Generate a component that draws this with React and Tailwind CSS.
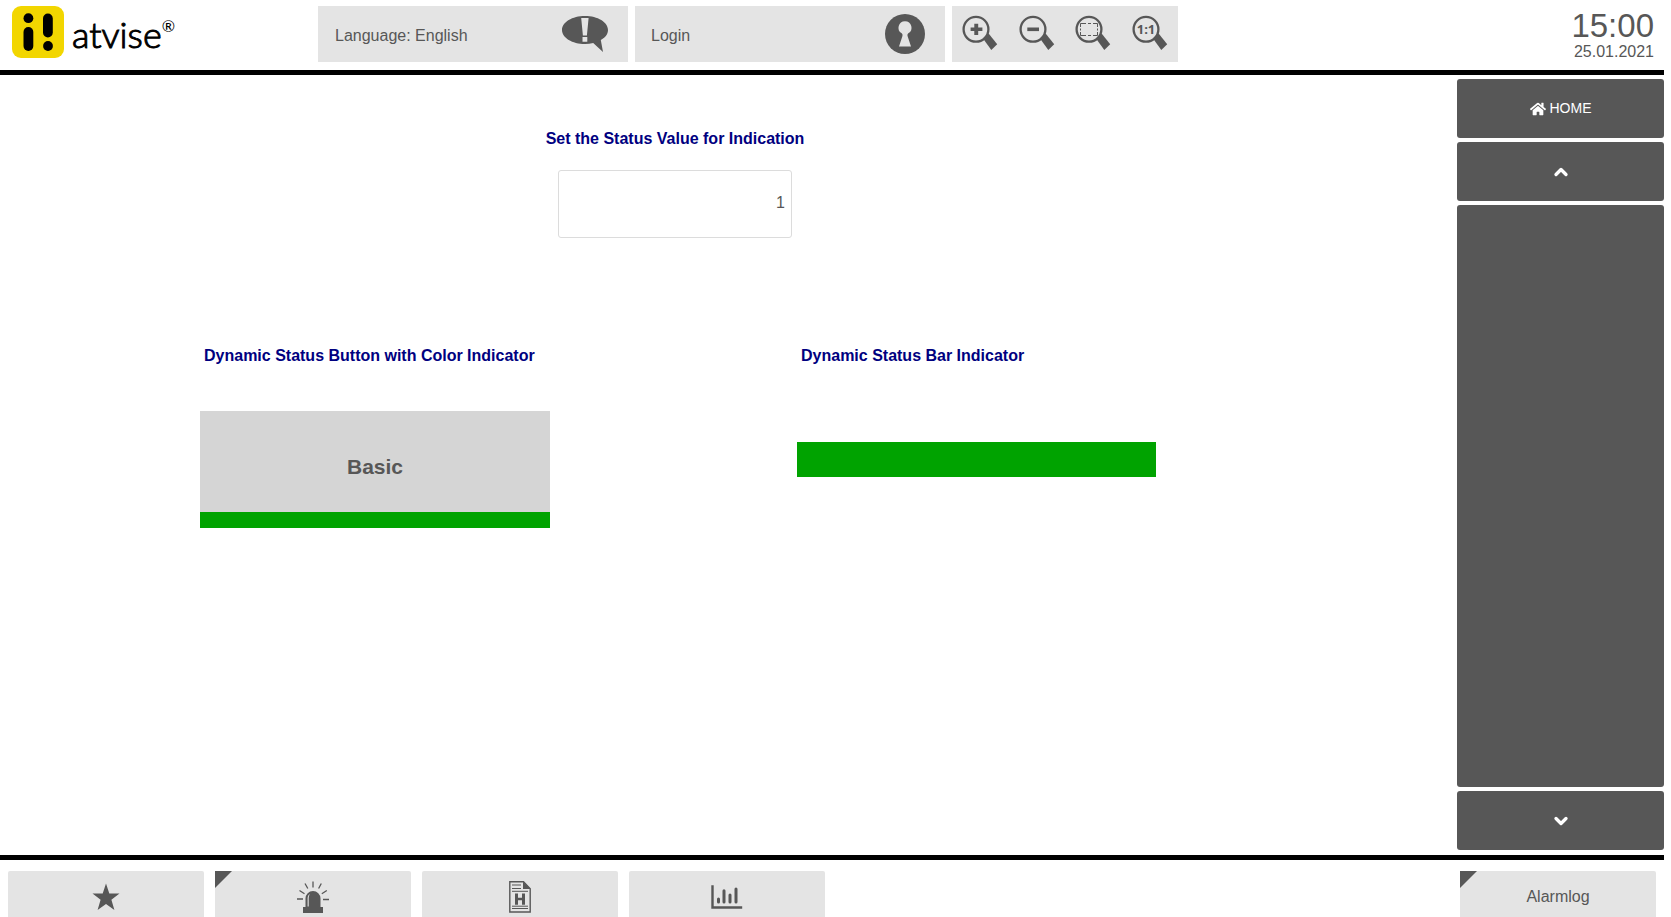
import { useState } from "react";
import { ChevronDown, ChevronUp } from "lucide-react";
import { FaHome } from "react-icons/fa";

const INK = "#575757";

function Logo() {
  return (
    <a href="#" aria-label="atvise" className="flex items-center gap-2 text-black">
      <svg width="52" height="52" viewBox="0 0 52 52">
        <rect width="52" height="52" rx="9" fill="#f2d600" />
        <circle cx="16.4" cy="12.2" r="4.9" />
        <rect x="11.5" y="21" width="9.8" height="24" rx="4.9" />
        <rect x="31" y="7.5" width="9.8" height="24" rx="4.9" />
        <circle cx="36" cy="40" r="4.9" />
      </svg>
      <span className="flex items-start pt-1 font-['Lato',sans-serif] text-[36px] leading-9 font-light [-webkit-text-stroke:1px_black]">
        atvise
        <span className="text-[16px] leading-5 font-normal [-webkit-text-stroke:0]">®</span>
      </span>
    </a>
  );
}

function SpeechIcon() {
  return (
    <svg width="46" height="38" viewBox="0 0 46 38" fill={INK}>
      <path d="M23 1C35.700 1 46 7.200 46 15c0 4.300-2.800 7.500-7.200 10.100L41 37l-9.800-9.100C28.700 28.600 26 29 23 29 10.300 29 0 22.800 0 15S10.300 1 23 1z" />
      <path d="M19.200 3h7.400l-1.700 17.500h-4zM20.500 22h4.800v4.800h-4.800z" fill="#e4e4e4" />
    </svg>
  );
}

function KeyholeIcon() {
  return (
    <svg width="40" height="40" viewBox="0 0 40 40" fill={INK}>
      <circle cx="20" cy="20" r="20" />
      <path
        d="M20 7.200a6.500 6.500 0 0 1 3.300 12.100c-1 .8-1 1.800-.6 3.200L26 32.500H14l3.300-10c.4-1.400.4-2.400-.6-3.200A6.500 6.500 0 0 1 20 7.200z"
        fill="#e4e4e4"
      />
    </svg>
  );
}

function Magnifier({ children }) {
  return (
    <svg width="36" height="36" viewBox="0 0 36 36" fill={INK}>
      <circle cx="14" cy="14.300" r="12.400" fill="none" stroke={INK} strokeWidth="2.300" />
      <path d="M21 23.600l5.400-5.300 8.800 11-5.900 5.700z" />
      {children}
    </svg>
  );
}

const ZOOMS = [
  { label: "Zoom in", art: <path d="M12.300 8.700h3.900v3.700h4.200v3.700h-4.200v3.800h-3.900v-3.800H8.600v-3.700h3.700z" /> },
  { label: "Zoom out", art: <path d="M8.300 12.500h11.700v3.600H8.300z" /> },
  {
    label: "Zoom to fit",
    art: (
      <path
        d="M5.500 12V8.500H11M13 8.500h3M18 8.500h4.500V12M22.500 17v3.500H18M16 20.500h-3M11 20.500H5.500V17M5.500 13.500v2M22.500 13.500v2"
        fill="none"
        stroke={INK}
        strokeWidth="1"
      />
    ),
  },
  {
    label: "Original size",
    art: (
      <text x="14" y="19" textAnchor="middle" fontFamily="Open Sans, sans-serif" fontWeight="700" fontSize="13">
        1:1
      </text>
    ),
  },
];

function StarIcon() {
  return (
    <svg width="28" height="28" viewBox="0 0 28 28" fill={INK}>
      <path d="M14 0.500l3.300 9.900h10.200l-8.100 6.400 3 10.200-8.400-6-8.400 6 3-10.200L0.500 10.400h10.200z" />
    </svg>
  );
}

function BeaconIcon() {
  return (
    <svg width="32" height="32" viewBox="0 0 32 32" fill={INK}>
      <path d="M6 26h2.500V17.500a7.500 7.500 0 0 1 15 0V26H26v6H6z" />
      <path d="M10.600 25.500v-8c0-2.300.8-3.700 2.200-4.600-.8 1.600-1.100 3-1.100 4.800v7.800z" fill="#e4e4e4" />
      <path
        d="M0 18h6M26 18.500h6M2.500 9.500l5 3.200M29.800 9.500l-5 3.200M8 2.500l2.800 5M24.300 2.500l-2.700 5M16 0.500v6"
        fill="none"
        stroke={INK}
        strokeWidth="1.300"
      />
    </svg>
  );
}

function HistoryIcon() {
  return (
    <svg width="22" height="32" viewBox="0 0 22 32" fill={INK}>
      <path d="M0.800 0.800h13.700l6.700 7V31H0.800z" fill="none" stroke={INK} strokeWidth="1.400" />
      <path d="M14 0.500L21.500 8H14z" />
      <path d="M3 4h9M3 7.500h9M3 10.300h16M3 25.200h16M3 27.500h16" stroke={INK} strokeWidth="1" />
      <path d="M6 12.500h3v4.300h4v-4.300h3v11.300h-3v-4.500H9v4.500H6z" />
    </svg>
  );
}

function ChartIcon() {
  return (
    <svg width="32" height="24" viewBox="0 0 32 24" fill="none" stroke={INK} strokeWidth="3" strokeLinecap="round">
      <path d="M1.500 1.500v21H30" strokeWidth="2.400" strokeLinecap="square" />
      <path d="M7.500 14v3M13 5.800V17M19 10v7M25 4v13" />
    </svg>
  );
}

const SHORTCUTS = [
  { label: "Favourites", Icon: StarIcon },
  { label: "Alarms", Icon: BeaconIcon, corner: true },
  { label: "History", Icon: HistoryIcon },
  { label: "Trends", Icon: ChartIcon },
];

function FooterButton({ corner, children, ...props }) {
  return (
    <button
      {...props}
      className="relative flex h-[52px] w-[196px] items-center justify-center rounded-xs bg-[#e4e4e4] text-[16px]"
    >
      {corner && (
        <svg className="absolute top-0 left-0" width="17" height="17" viewBox="0 0 17 17" fill={INK}>
          <path d="M0 0h17L0 17z" />
        </svg>
      )}
      {children}
    </button>
  );
}

function Header() {
  return (
    <header className="flex h-[75px] shrink-0 items-start border-b-5 border-black pt-1.5 pr-2.5 pl-3">
      <div className="w-[306px]">
        <Logo />
      </div>
      <div className="flex gap-[7px]">
        <button className="flex h-14 w-[310px] items-center justify-between bg-[#e4e4e4] pr-5 pl-[17px] text-[16px]">
          <span className="pt-1">Language: English</span>
          <SpeechIcon />
        </button>
        <button className="flex h-14 w-[310px] items-center justify-between bg-[#e4e4e4] pr-5 pl-4 text-[16px]">
          <span className="pt-1">Login</span>
          <KeyholeIcon />
        </button>
        <div className="flex h-14 w-[226px] items-center justify-between bg-[#e4e4e4] pr-2.5 pb-0.5 pl-2.5">
          {ZOOMS.map(({ label, art }) => (
            <button key={label} aria-label={label}>
              <Magnifier>{art}</Magnifier>
            </button>
          ))}
        </div>
      </div>
      <div className="ml-auto pt-0.5 text-right">
        <div className="text-[33px] leading-9">15:00</div>
        <div className="text-[16px] leading-4">25.01.2021</div>
      </div>
    </header>
  );
}

function Sidebar() {
  const box = "flex items-center justify-center rounded-[3px] bg-[#575757] text-[14px] text-white";
  return (
    <nav className="flex w-[207px] shrink-0 flex-col gap-1">
      <a href="#" className={`${box} h-[59px] gap-1`}>
        <FaHome size={16} />
        HOME
      </a>
      <button aria-label="Scroll up" className={`${box} h-[59px]`}>
        <ChevronUp size={20} strokeWidth={4} />
      </button>
      <div className={`${box} flex-1`} />
      <button aria-label="Scroll down" className={`${box} h-[59px]`}>
        <ChevronDown size={20} strokeWidth={4} />
      </button>
    </nav>
  );
}

function Display() {
  const [status, setStatus] = useState("1");

  return (
    <main className="min-w-0 flex-1 pt-12 pl-[200px]">
      <div className="w-full max-w-[956px] text-[16px]">
        <section className="flex flex-col items-center pr-1.5">
          <label htmlFor="status" className="leading-6 font-bold text-[#000080]">
            Set the Status Value for Indication
          </label>
          <input
            id="status"
            value={status}
            onChange={(e) => setStatus(e.target.value)}
            className="mt-[19px] h-[68px] w-[234px] rounded-[3px] border border-[#dcdcdc] px-1.5 pb-0.5 text-right outline-none"
          />
        </section>

        <div className="mt-[106px] flex justify-between">
          <section className="w-[350px]">
            <h2 className="pl-1 leading-6 font-bold text-[#000080]">Dynamic Status Button with Color Indicator</h2>
            <button className="mt-[43px] h-[117px] w-full border-b-16 border-[#00a300] bg-[#d5d5d5] pt-2.5 text-[21px] font-bold">
              Basic
            </button>
          </section>
          <section className="w-[359px]">
            <h2 className="pl-1 leading-6 font-bold text-[#000080]">Dynamic Status Bar Indicator</h2>
            <div className="mt-[74px] h-[35px] bg-[#00a300]" />
          </section>
        </div>
      </div>
    </main>
  );
}

export default function App() {
  return (
    <div className="flex h-screen flex-col overflow-hidden bg-white pr-[7px] font-['Liberation_Sans',Arial,sans-serif] text-[#575757]">
      <Header />
      <div className="flex min-h-0 flex-1 pt-1 pb-[5px]">
        <Display />
        <Sidebar />
      </div>
      <footer className="flex h-[62px] shrink-0 items-start gap-[11px] border-t-5 border-black px-2 pt-[11px]">
        {SHORTCUTS.map(({ label, Icon, corner }) => (
          <FooterButton key={label} aria-label={label} corner={corner}>
            <Icon />
          </FooterButton>
        ))}
        <div className="ml-auto">
          <FooterButton corner>Alarmlog</FooterButton>
        </div>
      </footer>
    </div>
  );
}
